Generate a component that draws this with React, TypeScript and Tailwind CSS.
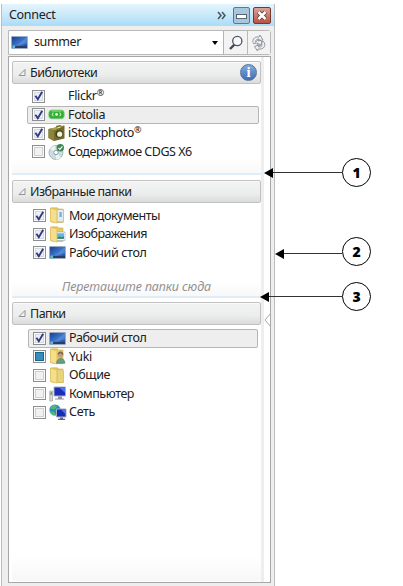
import React from "react";

function Monitor() {
  return (
    <svg width="17" height="15" viewBox="0 0 17 15" className="block">
      <defs>
        <linearGradient id="screen" x1="0" y1="0" x2="1" y2="1">
          <stop offset="0" stopColor="#163a8c" />
          <stop offset=".55" stopColor="#3f7bd0" />
          <stop offset="1" stopColor="#173f91" />
        </linearGradient>
      </defs>
      <rect x=".7" y="1.7" width="15.6" height="11.6" fill="url(#screen)" stroke="#8b9bb0" strokeWidth=".7" />
      <path d="M1.1 11h14.8v2H1.1z" fill="#263e68" />
      <path d="M6 10.8 15.8 2.5v6z" fill="#8bb7ed" opacity=".3" />
      <circle cx="2.7" cy="11.8" r="1.6" fill="#60b9d1" />
    </svg>
  );
}

function Folder({ kind }: { kind: "doc" | "image" | "user" | "plain" }) {
  return (
    <svg width="17" height="17" viewBox="1 0 16 17" className="block">
      <path d="M3 .8h6l1 1.2h4.5v13.5H5L2 14.5V1.3z" fill="#e8c85f" stroke="#cfad50" strokeWidth=".6" />
      {kind === "doc" && (
        <g>
          <path d="M8.5 2.5h6.5v12.3H8.5z" fill="#e3ebf1" stroke="#9cadb9" strokeWidth=".6" />
          <path d="M11 5h2.2v5H11z" fill="#7ba9d0" />
        </g>
      )}
      {kind === "image" && (
        <g>
          <path d="M7 6h9.5v8.5H7z" fill="#f6fafc" stroke="#8babbf" strokeWidth=".6" />
          <path d="M8 7.3h7.5v5.5H8z" fill="#68b5d8" />
          <path d="m8 12.8 2.8-2.5 1.8 1 2.9-.9v2.4z" fill="#3d8057" />
        </g>
      )}
      {kind === "plain" && <path d="M8.5 2.5h5.2L15 4v11.5H8.5z" fill="#e9d47c" stroke="#cfb15b" strokeWidth=".6" />}
      <path d="M2 1.2 8.3 3v13.2L2 14.3z" fill="#f5df8b" stroke="#dbbd60" strokeWidth=".6" />
      {kind === "user" && (
        <g>
          <path d="M8 15.3c0-6.5 8.5-6.5 8.5 0z" fill="#659d86" stroke="#40765f" strokeWidth=".5" />
          <circle cx="12" cy="7" r="2.6" fill="#c79e7d" />
          <path d="M9.2 7c-.3-4.5 5.9-4.7 5.7 0-2-.5-2.3-2-2.8-2.3C11.3 6 10 6.2 9.2 7z" fill="#78644f" />
        </g>
      )}
    </svg>
  );
}

function Fotolia() {
  return (
    <svg width="17" height="17" viewBox="0 0 17 17" className="block">
      <rect x=".8" y="4" width="15.4" height="8.8" rx="3" fill="#35ad39" stroke="#80ce79" strokeWidth=".7" />
      <path d="M3.5 5h10" stroke="#8bdc78" strokeWidth="1.2" />
      <circle cx="8.5" cy="8.4" r="1.4" fill="#eaffdf" />
      <path d="M5.2 6.6q-1.8 1.8 0 3.6M11.8 6.6q1.8 1.8 0 3.6" fill="none" stroke="#eaffdf" />
    </svg>
  );
}

function Camera() {
  return (
    <svg width="17" height="18" viewBox="0 0 17 18" className="block">
      <path d="m.5 5 7-1.5 1-1.8 4-.7 1 1 3-.6v13L6 17 .5 14z" fill="#716c2a" />
      <path d="m.5 5 7-1.5 9-2-10 5z" fill="#a7a04e" />
      <path d="M.5 5 6 7v10L.5 14z" fill="#8b8439" />
      <circle cx="11.3" cy="10" r="3.8" fill="#454119" />
      <circle cx="11.7" cy="10.2" r="2.6" fill="#f1f1dc" />
      <path d="m9.5 3.7 3-.6" stroke="#e5dfb0" />
    </svg>
  );
}

function Disc() {
  return (
    <svg width="18" height="18" viewBox="0 0 18 18" className="block">
      <circle cx="8" cy="9.5" r="7" fill="#ccdae1" stroke="#a9b7bf" />
      <path d="M8 9.5 2 6a7 7 0 0 1 5-3.5zM8 9.5l5 5a7 7 0 0 1-5 2z" fill="#eaf3ef" />
      <circle cx="8" cy="9.5" r="2.2" fill="white" stroke="#8fa0aa" />
      <circle cx="12.3" cy="4.8" r="3.7" fill="#398950" />
      <path d="m10.5 4.8 1.4 1.5 2.5-3" fill="none" stroke="white" strokeWidth="1.2" />
    </svg>
  );
}

function Computer({ network = false }: { network?: boolean }) {
  return (
    <svg width="18" height="17" viewBox="0 0 18 17" className="block">
      {network ? (
        <g>
          <circle cx="6" cy="6" r="5.6" fill="#278fc4" />
          <path d="M1 4 5 .8 8 2 6 5 3 5zM1 7l4 1 2 3-2 .5C3 11 1 9 1 7z" fill="#56b969" />
          <path d="M7.5 5H17v8H7.5z" fill="#162cb6" stroke="#a4acc1" />
          <path d="m12 5.5 4.5.2v4.6z" fill="#5078eb" />
          <path d="M11 13.5h3v1.3h2v1.2H9v-1.2h2z" fill="#5c6675" />
        </g>
      ) : (
        <g>
          <path d="M.8 6h2.8v10H.8z" fill="#d8d9d8" stroke="#9ca19f" strokeWidth=".7" />
          <path d="M1.5 7h1.3v3H1.5z" fill="#5a9b57" />
          <path d="M5 2h11.5v9H5z" fill="#1d2cba" stroke="#a9b0bf" />
          <path d="m10 2.5 6 .2v5z" fill="#5272e5" />
          <path d="M9 11.5h4v2h2v1H6v-1h3z" fill="#8c929b" />
        </g>
      )}
    </svg>
  );
}

function CheckBox({ state }: { state: "on" | "off" | "mixed" }) {
  return (
    <span className="flex size-[13px] shrink-0 items-center justify-center border border-[#8f8f8f] bg-[#fafafa] p-px">
      <span className={`flex size-[9px] items-center justify-center border ${state === "mixed" ? "border-[#16658c] bg-[#388dbb]" : state === "on" ? "border-[#d4d8e0] bg-[#eff0f4]" : "border-[#d0d0d0] bg-[#f0f1f2]"}`}>
        {state === "on" && (
          <svg width="10" height="10" viewBox="0 0 10 10" className="shrink-0">
            <path d="m1.4 4.8 2.4 3.4L8.2.8" fill="none" stroke="#303b85" strokeWidth="1.9" />
          </svg>
        )}
      </span>
    </span>
  );
}

function Row({ label, tracking = "tracking-[-0.35px]", icon, state = "on", selected = false, registered = false, inset = false }: {
  label: string; tracking?: string; icon?: React.ReactNode; state?: "on" | "off" | "mixed"; selected?: boolean; registered?: boolean; inset?: boolean;
}) {
  return (
    <div className={`flex h-[18.5px] items-center border pl-[4px] ${inset ? "ml-4 w-[230px]" : "ml-[15px] w-[232px]"} ${selected ? "rounded-[2px] border-[#b5b5b5] bg-[#eeeeee]" : "border-transparent"}`}>
      <CheckBox state={state} />
      <span className="ml-[2px] flex w-[19px] shrink-0 justify-center">{icon}</span>
      <span className={`ml-[2px] flex whitespace-nowrap leading-[18px] ${tracking}`}>
        {label}{registered && <span className="-mt-[3px] text-[9px]">®</span>}
      </span>
    </div>
  );
}

function Header({ label, info = false }: { label: string; info?: boolean }) {
  return (
    <div className="flex h-[23px] w-[249px] shrink-0 items-center rounded-[2px] border border-[#c1c1c1] bg-linear-to-b from-[#f2f2f2] via-[#eceeee] via-60% to-[#dadcdc] pl-[5px] pr-[3px] shadow-[inset_0_1px_0_#fafafa]">
      <svg width="9" height="9" viewBox="0 0 9 9"><path d="M1 7.5 7 1.5v6z" fill="#f3f3f3" stroke="#929292" /></svg>
      <span className="ml-[3px] leading-[20px] tracking-[-0.5px]">{label}</span>
      {info && (
        <span className="ml-auto flex size-[17px] items-center justify-center rounded-full border border-[#5273a3] bg-linear-to-b from-[#83aadb] to-[#3d6eb4] font-['Liberation_Serif',serif] text-[15px] font-bold leading-none text-white">i</span>
      )}
    </div>
  );
}

function Callout({ value, length, drop = "" }: { value: string; length: string; drop?: string }) {
  return (
    <div className="flex items-center">
      <span className={`h-0 w-0 border-y-[5px] border-r-[9px] border-y-transparent border-r-black ${drop}`} />
      <span className={`h-px bg-[#333] ${length} ${drop}`} />
      <span className="flex size-[29px] items-center justify-center rounded-full border border-black bg-white font-['Open_Sans',sans-serif] text-[14px] font-extrabold leading-none text-black">{value}</span>
    </div>
  );
}

export default function App() {
  return (
    <main className="relative h-[586px] w-[403px] overflow-hidden bg-white pt-1 font-['Noto_Sans','Open_Sans',sans-serif] text-[12.5px] tracking-[-0.1px] text-[#202020]">
      <section className="ml-px flex h-[582px] w-[274px] flex-col border-x border-[#bcbcbc] bg-[#eeeeee]">
        <div className="flex h-[22px] shrink-0 items-center bg-linear-to-b from-[#e4f5fd] via-[#cceafa] via-45% to-[#a9dcf7] pl-[7px] pr-[3px]">
          <span className="tracking-[-0.3px]">Connect</span>
          <svg className="ml-auto" width="9" height="9" viewBox="0 0 9 9"><path d="m1 1 3 3.5L1 8m4-7 3 3.5L5 8" fill="none" stroke="#47545d" strokeWidth="1.5" /></svg>
          <span className="ml-[7px] flex h-[17px] w-[17px] items-center justify-center rounded-[2px] border border-[#637889] bg-[#a9c7dc]">
            <span className="mt-[3px] h-[5px] w-[11px] border border-[#596571] bg-white" />
          </span>
          <span className="ml-[3px] flex h-[17px] w-[18px] items-center justify-center rounded-[2px] border border-[#71392f] bg-linear-to-b from-[#dba397] to-[#b95242]">
            <svg width="12" height="11" viewBox="0 0 12 11"><path d="m2.5 2 7 7m0-7-7 7" stroke="#65443f" strokeWidth="4.5" /><path d="m2.5 2 7 7m0-7-7 7" stroke="white" strokeWidth="2.5" /></svg>
          </span>
        </div>

        <div className="ml-[6px] mt-1 flex h-[25px] w-[263px] shrink-0 rounded-r-[3px] border border-[#b9b9b9] bg-white">
          <div className="flex w-[214px] items-center pl-[2px]">
            <Monitor />
            <span className="relative -top-px ml-[6px] leading-[20px] tracking-[-0.4px]">summer</span>
            <span className="ml-auto mr-[5px] border-x-[3.5px] border-t-[4px] border-x-transparent border-t-black" />
          </div>
          <div className="flex w-6 items-center justify-center border-l border-[#b3b3b3] bg-[#f3f3f3]">
            <svg width="16" height="16" viewBox="0 0 16 16"><path d="m6.5 9.5-4.5 4.5" stroke="#434552" strokeWidth="2.4" /><circle cx="9.3" cy="6" r="4.6" fill="#f6f8fb" stroke="#4c5362" strokeWidth="1.3" /></svg>
          </div>
          <div className="flex flex-1 items-center justify-center border-l border-[#b9b9b9] bg-[#f3f3f3]">
            <svg width="18" height="18" viewBox="0 0 18 18" fill="#eff0f2" stroke="#888c98" strokeWidth=".9"><path d="M4 10C1 7 4 2 9 3l1-2 3 5-5 1 1-2C6 5 5 7 6 9z" /><path d="M13 7c4 4 1 9-5 8l-.5 2-3-4.5 4.5-1.6-.5 2c4 .5 4-2 2.5-4z" /><path d="M6 8c1-3 6-3 6 1s-6 3-5 0l4 2" fill="none" /></svg>
          </div>
        </div>

        <div className="ml-[6px] mt-px flex h-[527px] w-[263px] shrink-0 border border-[#a7a7a7] bg-white">
          <div className="flex w-[252px] flex-col pl-[3px] pt-1">
            <Header label="Библиотеки" info />
            <div className="flex h-[91px] w-[249px] shrink-0 flex-col border-b-2 border-[#deedf7] bg-linear-to-b from-white from-85% to-[#f8f8f8] pt-[3px]">
              <Row label="Flickr" registered />
              <Row label="Fotolia" icon={<Fotolia />} selected />
              <Row label="iStockphoto" icon={<Camera />} registered />
              <Row label="Содержимое CDGS X6" tracking="tracking-[-0.47px]" icon={<Disc />} state="off" />
            </div>
            <div className="h-[5px] shrink-0" />
            <Header label="Избранные папки" />
            <div className="flex h-[95px] w-[249px] shrink-0 flex-col border-b-2 border-[#deedf7] bg-linear-to-b from-white from-85% to-[#f8f8f8] pt-[3.5px]">
              <Row label="Мои документы" tracking="tracking-[-0.48px]" icon={<Folder kind="doc" />} inset />
              <Row label="Изображения" tracking="tracking-[-0.5px]" icon={<Folder kind="image" />} inset />
              <Row label="Рабочий стол" icon={<Monitor />} inset />
              <p className="mt-[15.5px] pl-[50px] italic leading-[18px] tracking-[-0.1px] text-[#929292]">Перетащите папки сюда</p>
            </div>
            <div className="h-1 shrink-0" />
            <Header label="Папки" />
            <div className="mb-px flex w-[249px] flex-1 flex-col bg-linear-to-b from-white from-90% to-[#f7f7f7] pt-[4px]">
              <Row label="Рабочий стол" icon={<Monitor />} selected inset />
              <Row label="Yuki" icon={<Folder kind="user" />} state="mixed" inset />
              <Row label="Общие" icon={<Folder kind="plain" />} state="off" inset />
              <Row label="Компьютер" tracking="tracking-[-0.45px]" icon={<Computer />} state="off" inset />
              <Row label="Сеть" icon={<Computer network />} state="off" inset />
            </div>
          </div>
          <div className="w-[3px] bg-[#eeeeee]" />
          <div className="flex flex-1 items-center">
            <svg width="6" height="525" viewBox="0 0 6 525"><path d="m6 257-5 6 5 6" fill="white" stroke="#aaaaaa" /></svg>
          </div>
        </div>
      </section>
      <div className="absolute left-[264px] top-[158px]"><Callout value="1" length="w-[69px]" /></div>
      <div className="absolute left-[275px] top-[237px]"><Callout value="2" length="w-[58px]" drop="mt-[4px]" /></div>
      <div className="absolute left-[260px] top-[282px]"><Callout value="3" length="w-[73px]" /></div>
    </main>
  );
}
